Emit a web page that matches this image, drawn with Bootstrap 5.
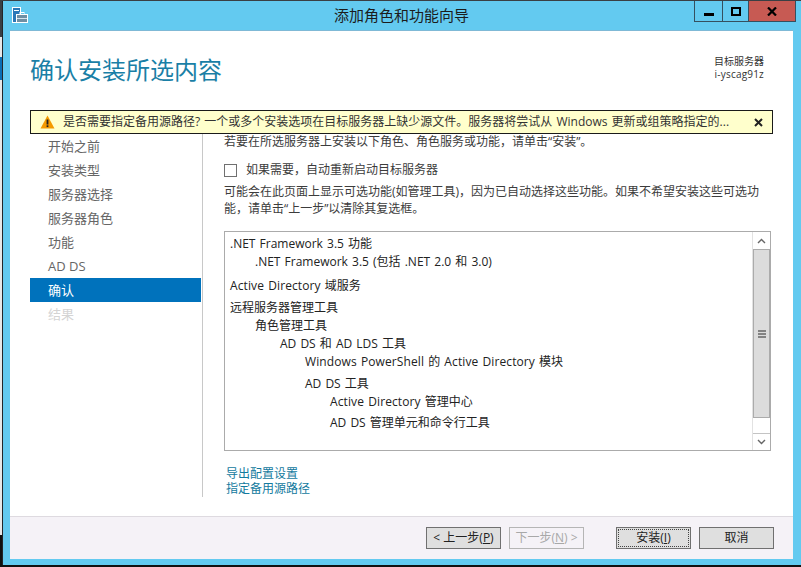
<!DOCTYPE html>
<html lang="zh">
<head>
  <meta charset="utf-8">
  <title>添加角色和功能向导</title>
  <link rel="stylesheet" href="https://cdn.jsdelivr.net/npm/bootstrap@5.3.0/dist/css/bootstrap.min.css">
  <style>
    html, body { height: 567px; overflow: hidden; }
    body { background: linear-gradient(#3a3f44 0 37px, #e8e8e8 37px 57px, #0a6fb5 57px 80px, #e8e8e8 80px 535px, #111 535px); font-family: "Open Sans", "Noto Sans CJK SC", sans-serif; font-size: 12px; line-height: 18px; color: #3c3c3c; }
    .win-frame { height: 564px; margin: 1px 0 2px 2px; border-left: 1px solid #22262a; background: #63caf0; padding: 0 8px 6px 7px; display: flex; flex-direction: column; }
    .win-title { height: 29px; flex: none; }
    .win-title-text { font-size: 15px; color: #1c1c1c; left: 0; right: 0; top: 5px; }
    .win-icon { margin: 6px 0 0 2px; display: block; }
    .win-ctrls { top: 0; right: -3px; height: 21px; border: 1px solid #35505f; border-top: 0; }
    .win-ctrl { width: 28px; height: 20px; border-right: 1px solid #35505f; }
    .win-ctrl-max { width: 26px; }
    .win-ctrl-close { width: 46px; background: #c75a53; border-right: 0; color: #000; }
    .win-panel { flex: 1; background: #fff; border-top: 1px solid #7fb9d6; min-height: 0; }
    .win-head { height: 79px; padding: 21px 29px 0 20px; }
    .win-heading { font-size: 24px; line-height: 36px; font-weight: 400; color: #1a7fa6; margin: 0; }
    .win-server { font-size: 10px; line-height: 13px; text-align: right; padding-top: 3px; color: #333; }
    .server-id { letter-spacing: .2px; }
    .warn-bar { left: 20px; top: 79px; width: 743px; height: 24px; background: #ffffcc; border: 1px solid #1a1a1a; padding: 0 9px; color: #333; white-space: nowrap; word-spacing: 1px; z-index: 2; }
    .warn-x { margin-left: auto; font-weight: 700; }
    .win-body { height: 387px; padding-left: 20px; }
    .side-nav { width: 171px; padding-top: 24px; }
    .side-item { height: 24px; line-height: 24px; padding-left: 18px; font-size: 13px; color: #666; }
    .side-item-on { background: #0072bc; color: #fff; }
    .side-item-off { color: #d4d4d4; }
    .side-rule { width: 1px; margin-left: 1px; background: #c8c8c8; }
    .main-col { padding-left: 21px; width: 570px; }
    .lead-line { margin: 23px 0 0; line-height: 17px; }
    .restart-row { margin-top: 11px; height: 18px; }
    .restart-box { width: 13px; height: 13px; border: 1px solid #707070; margin-right: 9px; }
    .note-text { margin: 4px 0 0; line-height: 17px; }
    .role-box { width: 547px; height: 220px; margin-top: 14px; border: 1px solid #ababab; }
    .role-list { flex: 1; padding: 3px 0 0 5px; color: #222; word-spacing: 1px; }
    .role-list div { height: 18px; white-space: nowrap; }
    .lat { letter-spacing: .1px; }
    .ind1 { padding-left: 25px; }
    .ind2 { padding-left: 50px; }
    .ind3 { padding-left: 75px; }
    .ind4 { padding-left: 100px; }
    .gap-a { margin-top: 6px; }
    .gap-b { margin-top: 4px; }
    .gap-c { margin-top: 3px; }
    .scroll-col { width: 18px; border-left: 1px solid #e2e2e2; }
    .scroll-btn { height: 17px; flex: none; background: #fff; }
    .scroll-btn-end { border-top: 1px solid #c4c4c4; }
    .scroll-thumb { height: 169px; flex: none; background: #dcdcdc; border: 1px solid #ababab; }
    .scroll-gap { flex: 1; background: #fff; }
    .links-box { margin-top: 15px; padding-left: 2px; line-height: 15px; }
    .links-box a { color: #137a9e; text-decoration: none; display: block; }
    .win-foot { height: 43px; background: #f5f2f7; border-top: 1px solid #dedae0; padding: 10px 19px 0 0; }
    .wiz-btn { width: 75px; height: 22px; border: 1px solid #707070; background: #dfdfdf; font-size: 12px; line-height: 18px; padding: 0; color: #222; border-radius: 0; }
    .wiz-btn:disabled { background: #f5f2f7; border-color: #b5b5b5; color: #a8a8a8; opacity: 1; }
    .wiz-btn-default { outline: 1px dotted #444; outline-offset: -3px; margin-left: 24px; }
    .wiz-btn u { text-underline-offset: 1px; }
  </style>
</head>
<body>
<div class="win-frame">
  <div class="win-title position-relative">
    <svg class="win-icon" width="16" height="17" viewBox="0 0 16 17">
      <rect x="0.5" y="0.5" width="8" height="15" fill="#2a78b8" stroke="#fff"/>
      <rect x="2" y="3" width="5" height="1" fill="#fff"/>
      <rect x="4.5" y="7.5" width="11" height="8" fill="#6f8fa3" stroke="#fff"/>
      <rect x="8" y="5.5" width="4" height="2" fill="none" stroke="#fff"/>
      <rect x="5" y="11" width="10" height="1" fill="#d5e3ec"/>
    </svg>
    <div class="win-title-text position-absolute text-center">添加角色和功能向导</div>
    <div class="win-ctrls position-absolute d-flex">
      <div class="win-ctrl d-flex align-items-center justify-content-center">
        <svg width="10" height="10" viewBox="0 0 10 10"><rect y="7" width="10" height="3" fill="#000"/></svg>
      </div>
      <div class="win-ctrl win-ctrl-max d-flex align-items-center justify-content-center">
        <svg width="10" height="9" viewBox="0 0 10 9"><rect x="1" y="1" width="8" height="7" fill="none" stroke="#000" stroke-width="2"/></svg>
      </div>
      <div class="win-ctrl win-ctrl-close d-flex align-items-center justify-content-center">
        <svg width="10" height="9" viewBox="0 0 10 9"><path d="M1 0.5 L9 8.5 M9 0.5 L1 8.5" stroke="#000" stroke-width="2.2" fill="none"/></svg>
      </div>
    </div>
  </div>
  <div class="win-panel position-relative d-flex flex-column">
    <div class="win-head d-flex justify-content-between align-items-start">
      <h1 class="win-heading">确认安装所选内容</h1>
      <div class="win-server">目标服务器<br><span class="server-id">i-yscag91z</span></div>
    </div>
    <div class="warn-bar position-absolute d-flex align-items-center">
      <svg width="15" height="14" viewBox="0 0 15 14" class="me-2 flex-none">
        <path d="M7.5 0.5 L14.5 13.5 H0.5 Z" fill="#f59a00"/>
        <rect x="6.6" y="4.5" width="1.8" height="5" fill="#222"/>
        <rect x="6.6" y="10.3" width="1.8" height="1.8" fill="#222"/>
      </svg>
      <span>是否需要指定备用源路径? 一个或多个安装选项在目标服务器上缺少源文件。服务器将尝试从 Windows 更新或组策略指定的...</span>
      <span class="warn-x">
        <svg width="9" height="9" viewBox="0 0 9 9"><path d="M1 1 L8 8 M8 1 L1 8" stroke="#222" stroke-width="2" fill="none"/></svg>
      </span>
    </div>
    <div class="win-body d-flex">
      <div class="side-nav">
        <div class="side-item">开始之前</div>
        <div class="side-item">安装类型</div>
        <div class="side-item">服务器选择</div>
        <div class="side-item">服务器角色</div>
        <div class="side-item">功能</div>
        <div class="side-item">AD DS</div>
        <div class="side-item side-item-on">确认</div>
        <div class="side-item side-item-off">结果</div>
      </div>
      <div class="side-rule"></div>
      <div class="main-col">
        <p class="lead-line">若要在所选服务器上安装以下角色、角色服务或功能，请单击“安装”。</p>
        <div class="restart-row d-flex align-items-center">
          <span class="restart-box"></span><span>如果需要，自动重新启动目标服务器</span>
        </div>
        <p class="note-text">可能会在此页面上显示可选功能(如管理工具)，因为已自动选择这些功能。如果不希望安装这些可选功能，请单击“上一步”以清除其复选框。</p>
        <div class="role-box d-flex">
          <div class="role-list">
            <div>.NET Framework 3.5 功能</div>
            <div class="ind1">.NET Framework 3.5 (包括 .NET 2.0 和 3.0)</div>
            <div class="gap-a"><span class="lat">Active Directory</span> 域服务</div>
            <div class="gap-b">远程服务器管理工具</div>
            <div class="ind1">角色管理工具</div>
            <div class="ind2">AD DS 和 AD LDS 工具</div>
            <div class="ind3"><span class="lat">Windows PowerShell</span> 的 <span class="lat">Active Directory</span> 模块</div>
            <div class="ind3 gap-b">AD DS 工具</div>
            <div class="ind4"><span class="lat">Active Directory</span> 管理中心</div>
            <div class="ind4 gap-c">AD DS 管理单元和命令行工具</div>
          </div>
          <div class="scroll-col d-flex flex-column">
            <div class="scroll-btn d-flex align-items-center justify-content-center">
              <svg width="9" height="6" viewBox="0 0 9 6"><path d="M1 5 L4.5 1.5 L8 5" stroke="#666" stroke-width="1.4" fill="none"/></svg>
            </div>
            <div class="scroll-thumb d-flex align-items-center justify-content-center">
              <svg width="8" height="8" viewBox="0 0 8 8"><path d="M0 1 H8 M0 4 H8 M0 7 H8" stroke="#666" stroke-width="1.4"/></svg>
            </div>
            <div class="scroll-gap"></div>
            <div class="scroll-btn scroll-btn-end d-flex align-items-center justify-content-center">
              <svg width="9" height="6" viewBox="0 0 9 6"><path d="M1 1 L4.5 4.5 L8 1" stroke="#666" stroke-width="1.4" fill="none"/></svg>
            </div>
          </div>
        </div>
        <div class="links-box">
          <a href="#">导出配置设置</a>
          <a href="#">指定备用源路径</a>
        </div>
      </div>
    </div>
    <div class="win-foot mt-auto d-flex justify-content-end align-items-start gap-2">
      <button class="wiz-btn">&lt; 上一步(<u>P</u>)</button>
      <button class="wiz-btn" disabled>下一步(<u>N</u>) &gt;</button>
      <button class="wiz-btn wiz-btn-default">安装(<u>I</u>)</button>
      <button class="wiz-btn">取消</button>
    </div>
  </div>
</div>
<script src="https://cdn.jsdelivr.net/npm/bootstrap@5.3.0/dist/js/bootstrap.bundle.min.js"></script>
</body>
</html>
